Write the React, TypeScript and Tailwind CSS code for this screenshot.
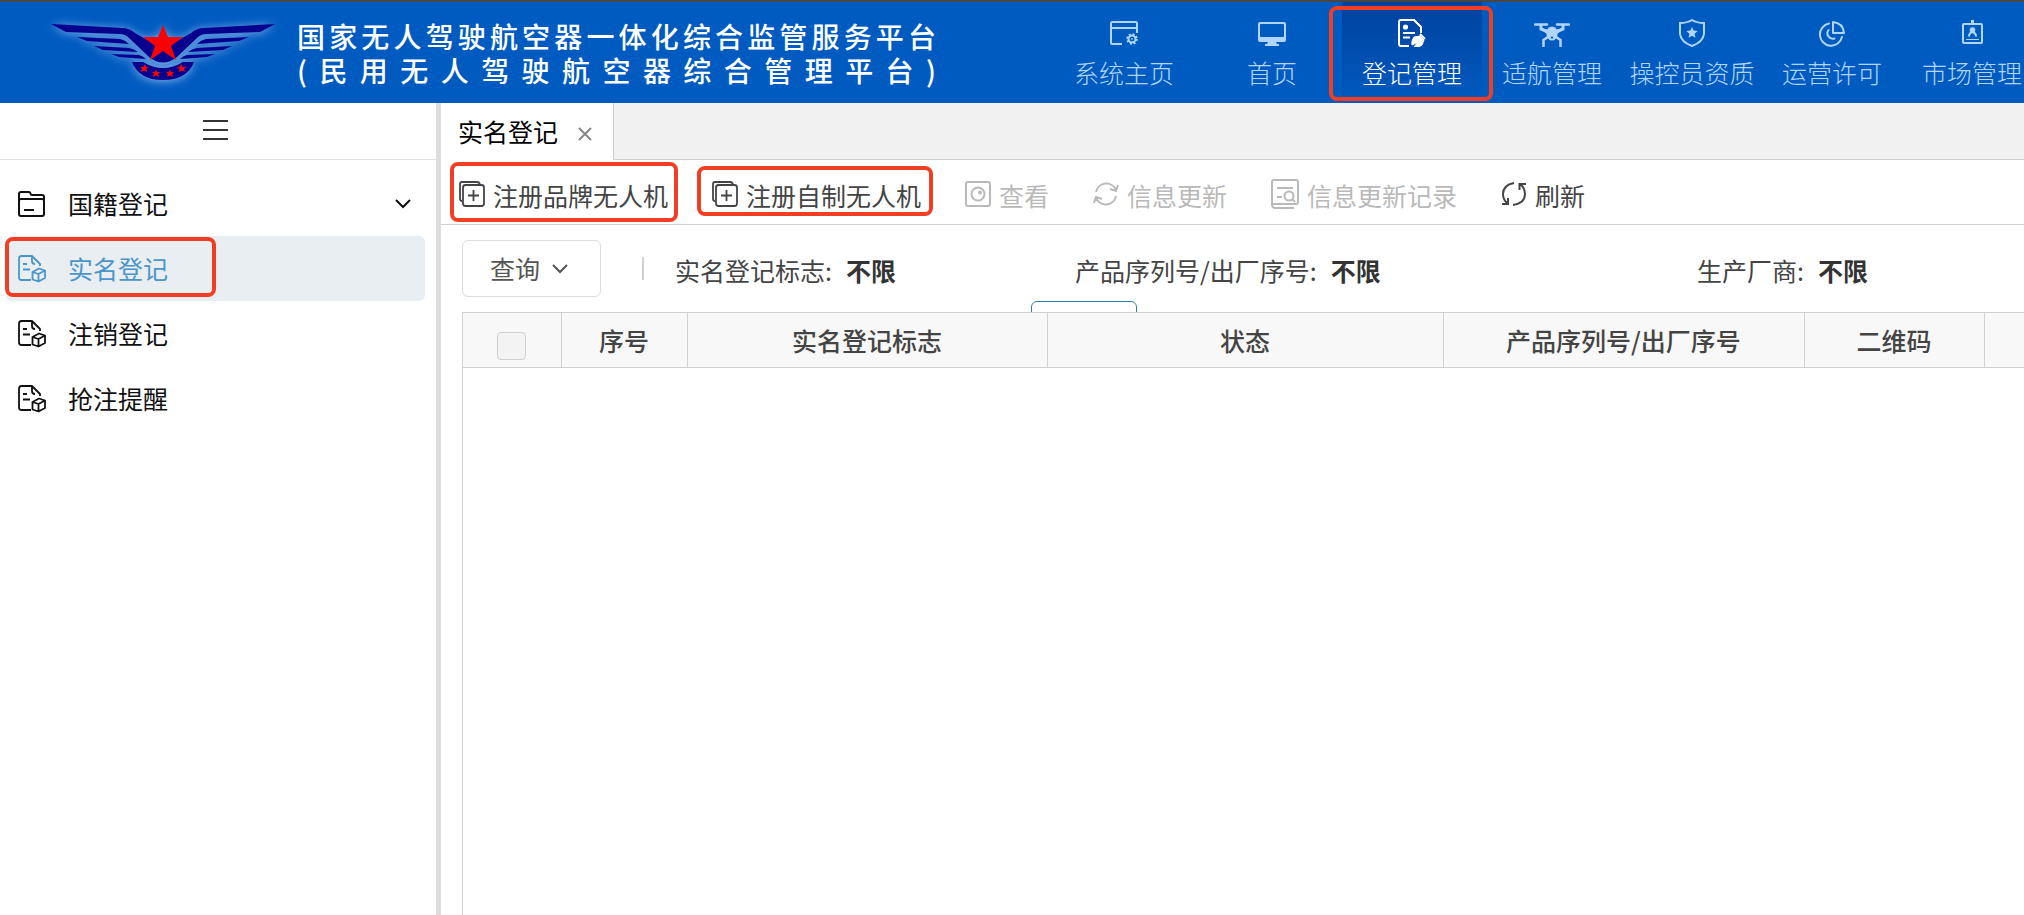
import React from 'react';

interface IconProps {
    className?: string;
}

const HighlightFrame: React.FC<IconProps> = ({ className = '' }) => (
    <span className={`pointer-events-none absolute rounded-lg border-4 border-[#f03e25] ${className}`} />
);

const Logo: React.FC = () => (
    <svg
        viewBox="0 0 224 60"
        className="h-[60px] w-56 shrink-0 overflow-visible drop-shadow-[0_1px_5px_#86b4ee]"
        aria-hidden="true"
    >
        <g fill="#07008f">
            <path d="M0 1 L71 5 Q78 5 84 10 L112 26 L140 10 Q146 5 153 5 L224 1 L209 9 L155 11 Q150 11 146 15 L126 34 Q112 45 98 34 L78 15 Q74 11 69 11 L15 9 Z" />
            <path d="M26 14 L69 16 Q74 17 78 21 L36 18 Z M198 14 L155 16 Q150 17 146 21 L188 18 Z" />
            <path d="M43 23 L78 25 Q83 26 87 29 L52 27 Z M181 23 L146 25 Q141 26 137 29 L172 27 Z" />
            <path d="M60 31 L88 32 Q92 33 95 36 L68 34 Z M164 31 L136 32 Q132 33 129 36 L156 34 Z" />
            <path d="M81 39 H92 Q102 45 112 45 Q122 45 132 39 H143 Q136 57 112 57 Q88 57 81 39 Z" />
        </g>
        <path
            d="M72 13 Q76 15 80 19 L98 36 Q112 49 126 36 L144 19 Q148 15 152 13"
            fill="none"
            stroke="#4c8ad4"
            strokeWidth="1.5"
        />
        <g fill="#f00">
            <path d="M112 2 L117 14 H132 L120 23 L125 37 L112 28 L99 37 L104 23 L92 14 H107 Z" />
            <path d="M94 41 L95 44 L98 44 L95.5 46 L96 49 L93 47.5 L90 49 L91 46 L89 44 L92.5 44 Z" />
            <path d="M105 46 L106 49 L109 49 L107 51 L108 54 L105 52.5 L102 54 L103 51 L101 49 L104 49 Z" />
            <path d="M119 46 L120 49 L123 49 L121 51 L122 54 L119 52.5 L116 54 L117 51 L115 49 L118 49 Z" />
            <path d="M130 41 L131.5 44 L135 44 L133 46 L134 49 L131 47.5 L128 49 L128.5 46 L126 44 L129 44 Z" />
        </g>
    </svg>
);

const navIconClass = 'h-7 w-9';

const SystemIcon: React.FC = () => (
    <svg viewBox="0 0 36 28" className={navIconClass} fill="none" stroke="currentColor" strokeWidth="2" aria-hidden="true">
        <path d="M16 25 H6.5 Q5 25 5 23.5 V4.5 Q5 3 6.5 3 H29.5 Q31 3 31 4.5 V14 M5 9 H31" />
        <circle cx="26" cy="20" r="3.5" />
        <circle cx="26" cy="20" r="4.8" strokeDasharray="1.885 1.885" />
        <circle cx="26" cy="20" r="0.5" strokeWidth="1" />
    </svg>
);

const MonitorIcon: React.FC = () => (
    <svg viewBox="0 0 36 28" className={navIconClass} aria-hidden="true">
        <path
            fill="currentColor"
            fillRule="evenodd"
            d="M6 3 H30 Q32 3 32 5 V21 Q32 23 30 23 H22 L23 25 H25 V27 H11 V25 H13 L14 23 H6 Q4 23 4 21 V5 Q4 3 6 3 Z M7 5 Q6 5 6 6 V17 Q6 18 7 18 H29 Q30 18 30 17 V6 Q30 5 29 5 Z"
        />
    </svg>
);

const RegisterIcon: React.FC = () => (
    <svg viewBox="0 0 36 28" className={navIconClass} fill="none" stroke="currentColor" strokeWidth="2" aria-hidden="true">
        <path d="M15 27 H7 Q5 27 5 25 V3 Q5 1 7 1 H20 L27 8 V14" />
        <path d="M19 1 L27 9 V7 L21 1 Z" fill="currentColor" strokeWidth="1" />
        <path d="M9 14 H21 M9 18.5 H16" />
        <circle cx="11.5" cy="8" r="2.6" fill="currentColor" stroke="none" />
        <path d="M18 26 Q17 22 20 18 L26 17 L30 21 L28 26 Q25 29 20 28 L24 23 Z" fill="currentColor" strokeWidth="1" />
        <path d="M26 15 L31 20" />
    </svg>
);

const DroneIcon: React.FC = () => (
    <svg viewBox="0 0 36 28" className={navIconClass} fill="none" stroke="currentColor" strokeWidth="2" aria-hidden="true">
        <path d="M1 5.5 H13 M23 5.5 H35" strokeLinecap="round" strokeWidth="2.5" />
        <path d="M7 6 V10 L14 13 M29 6 V10 L22 13" strokeWidth="3" />
        <path d="M14 18 L9.5 21 V27 M22 18 L26.5 21 V27" strokeWidth="2.5" strokeLinecap="round" />
        <path
            fill="currentColor"
            fillRule="evenodd"
            d="M18 8 Q22 8 22.5 11 L28 10 L23 15 L23 18 L20 21 H16 L13 18 V15 L8 10 L13.5 11 Q14 8 18 8 Z M18 17 A1.5 1.5 0 1 0 18 20 A1.5 1.5 0 1 0 18 17 Z"
            strokeWidth="0.8"
        />
    </svg>
);

const ShieldIcon: React.FC = () => (
    <svg viewBox="0 0 36 28" className={navIconClass} fill="none" stroke="currentColor" strokeWidth="2" aria-hidden="true">
        <path d="M18 1 Q23 4 30 4 V15 Q29 23 18 27 Q7 23 6 15 V4 Q13 4 18 1 Z" />
        <path
            fill="currentColor"
            stroke="none"
            d="M18 8 L19.6 11.6 L23.7 12 L20.6 14.8 L21.5 18.8 L18 16.7 L14.5 18.8 L15.4 14.8 L12.3 12 L16.4 11.6 Z"
        />
    </svg>
);

const PieIcon: React.FC = () => (
    <svg viewBox="0 0 36 28" className={navIconClass} fill="none" stroke="currentColor" strokeWidth="2" aria-hidden="true">
        <path d="M15 4.5 A11.2 11.2 0 1 0 28 18" strokeLinecap="round" />
        <path d="M19 3 Q29 4 30 14 H19 Z" strokeLinejoin="round" />
        <path d="M14.5 11 A5.5 5.5 0 0 0 20.5 19.5" strokeLinecap="round" />
    </svg>
);

const BadgeIcon: React.FC = () => (
    <svg viewBox="0 0 36 28" className={navIconClass} fill="none" stroke="currentColor" strokeWidth="2" aria-hidden="true">
        <rect x="9" y="5" width="19" height="19" rx="1" />
        <path d="M18.5 1 V5" strokeWidth="3" />
        <circle cx="18.5" cy="11" r="2.8" fill="currentColor" stroke="none" />
        <path d="M15 17.5 Q15 14 18.5 13 Q22 14 22 17.5" />
        <path d="M12 20.5 H25" strokeWidth="1" />
    </svg>
);

const FolderIcon: React.FC = () => (
    <svg viewBox="0 0 28 28" className="size-7" fill="none" stroke="currentColor" strokeWidth="2" aria-hidden="true">
        <path d="M1 10 V4 Q1 2 3 2 H11 Q12 2 12.5 3.5 Q13 5 14 5 H24 Q26 5 26 7 V10" />
        <rect x="1" y="9" width="25" height="17" rx="2" />
        <path d="M6 20 H16" />
    </svg>
);

const DocumentBoxIcon: React.FC = () => (
    <svg
        viewBox="0 0 28 28"
        className="size-7"
        fill="none"
        stroke="currentColor"
        strokeWidth="1.8"
        strokeLinejoin="round"
        aria-hidden="true"
    >
        <path d="M13 25 H3.5 Q1 25 1 22.5 V3.5 Q1 1 3.5 1 H14 L22 9 V11 M14 1 V6 Q14 9 17 9" />
        <path d="M5 9 H9 M5 14.5 H12" />
        <path d="M14.5 17 L21 13.5 L27 15.5 V23 L20.5 26.5 L14.5 24.5 Z M14.5 17 L20.5 19 L27 15.5 M20.5 19 V26.5" />
    </svg>
);

const ChevronIcon: React.FC<IconProps> = ({ className = '' }) => (
    <svg viewBox="0 0 16 10" className={`h-2.5 w-4 ${className}`} fill="none" stroke="currentColor" strokeWidth="2" aria-hidden="true">
        <path d="M1 1 L8 8 L15 1" />
    </svg>
);

const AddIcon: React.FC = () => (
    <svg viewBox="0 0 26 26" className="size-[26px]" fill="none" stroke="currentColor" strokeWidth="1.8" aria-hidden="true">
        <path d="M3 20 Q1 20 1 17.5 V3 Q1 1 3 1 H18 Q20 1 21 3" />
        <rect x="4" y="4" width="21" height="21" rx="2.5" />
        <path d="M14.5 9 V20 M9 14.5 H20" />
    </svg>
);

const ViewIcon: React.FC = () => (
    <svg viewBox="0 0 26 26" className="size-[26px]" fill="none" stroke="currentColor" strokeWidth="2" aria-hidden="true">
        <rect x="1" y="1" width="24" height="24" rx="2" />
        <circle cx="13" cy="13" r="6.5" />
        <circle cx="15" cy="11.5" r="2" fill="currentColor" stroke="none" />
    </svg>
);

const UpdateIcon: React.FC = () => (
    <svg viewBox="0 0 26 26" className="size-[26px]" fill="none" stroke="currentColor" strokeWidth="2" aria-hidden="true">
        <path d="M3 11 A10.5 10.5 0 0 1 23 9 M25 4 L23 10 L17 8" />
        <path d="M23 15 A10.5 10.5 0 0 1 3 17 M1 22 L3 16 L9 18" />
    </svg>
);

const RecordIcon: React.FC = () => (
    <svg viewBox="0 0 28 30" className="-my-0.5 h-[30px] w-7" fill="none" stroke="currentColor" strokeWidth="2" aria-hidden="true">
        <path d="M1 25 V3 Q1 1 3 1 H25 Q27 1 27 3 V23 Q27 25 25 25 H1 Q1 29 4 29 H23" />
        <path d="M6 9 H22 M6 18 H11" />
        <circle cx="18" cy="17" r="4.5" />
        <path d="M21 20 L24 23" />
    </svg>
);

const RefreshIcon: React.FC = () => (
    <svg viewBox="0 0 26 26" className="size-[26px]" fill="none" stroke="currentColor" strokeWidth="2" aria-hidden="true">
        <path d="M13 2 Q2 4 2 13 Q2 19 7 23 M1 23 H7 V17" />
        <path d="M12 24 Q24 22 24 13 Q24 7 19 3 M25 3 H18.5 V9" />
    </svg>
);

const navItems = [
    { label: '系统主页', icon: SystemIcon, wide: true },
    { label: '首页', icon: MonitorIcon },
    { label: '登记管理', icon: RegisterIcon, active: true },
    { label: '适航管理', icon: DroneIcon },
    { label: '操控员资质', icon: ShieldIcon },
    { label: '运营许可', icon: PieIcon },
    { label: '市场管理', icon: BadgeIcon },
];

const menuItems = [
    { label: '国籍登记', icon: FolderIcon, expandable: true },
    { label: '实名登记', icon: DocumentBoxIcon, active: true },
    { label: '注销登记', icon: DocumentBoxIcon },
    { label: '抢注提醒', icon: DocumentBoxIcon },
];

const actions = [
    { label: '注册品牌无人机', icon: AddIcon, frame: '-left-[9px] -right-[10px] -top-[17px] -bottom-[11px]' },
    { label: '注册自制无人机', icon: AddIcon, frame: '-left-[15px] -right-[12px] -top-[13px] -bottom-[5px]' },
    { label: '查看', icon: ViewIcon, disabled: true },
    { label: '信息更新', icon: UpdateIcon, disabled: true },
    { label: '信息更新记录', icon: RecordIcon, disabled: true },
    { label: '刷新', icon: RefreshIcon },
];

const filters = ['实名登记标志', '产品序列号/出厂序号', '生产厂商'];

const columns = [
    { label: '序号', width: 'w-[126px]' },
    { label: '实名登记标志', width: 'w-[360px]' },
    { label: '状态', width: 'w-[396px]' },
    { label: '产品序列号/出厂序号', width: 'w-[361px]' },
    { label: '二维码', width: 'w-[180px]' },
    { label: '', width: '' },
];

const Header: React.FC = () => (
    <header className="flex h-[103px] shrink-0 overflow-hidden border-t-2 border-[#464646] bg-[#005bc0]">
        <div className="flex shrink-0 items-center pl-[51px]">
            <Logo />
            <h1 className="ml-[22px] w-[639px] text-[28px] leading-[34px] font-medium text-white [text-align-last:justify]">
                国家无人驾驶航空器一体化综合监管服务平台
                <br />
                (民用无人驾驶航空器综合管理平台)
            </h1>
        </div>
        <nav className="ml-[110px] flex shrink-0">
            {navItems.map(({ label, icon: Icon, wide, active }) => (
                <a
                    key={label}
                    href="#"
                    className={`relative flex shrink-0 flex-col items-center gap-[11px] pt-[17px] text-[25px] leading-7 font-light ${
                        wide ? 'w-[156px]' : 'w-[140px]'
                    } ${active ? 'bg-linear-to-b from-[#00419f] to-[#005bc0] text-white' : 'text-[#b0d6ff]'}`}
                >
                    <Icon />
                    <span>{label}</span>
                    {active && <HighlightFrame className="-left-[13px] -right-[11px] top-1 bottom-0.5" />}
                </a>
            ))}
        </nav>
    </header>
);

const Sidebar: React.FC = () => (
    <aside className="w-[441px] shrink-0 border-r-[5px] border-[#dddddd] bg-white text-[#111]">
        <div className="flex h-[57px] items-center justify-center border-b border-[#e2e2e2]">
            <button type="button" aria-label="菜单" className="-mt-0.5 mr-[5px] flex flex-col gap-[7px]">
                <span className="h-0.5 w-[25px] bg-[#333]" />
                <span className="h-0.5 w-[25px] bg-[#333]" />
                <span className="h-0.5 w-[25px] bg-[#333]" />
            </button>
        </div>
        <nav className="pt-[11px] pr-[11px] pl-1.5">
            {menuItems.map(({ label, icon: Icon, active, expandable }) => (
                <a
                    key={label}
                    href="#"
                    className={`relative flex h-[65px] items-center gap-[22px] rounded-md pr-3.5 pl-3 text-[25px] ${
                        active ? 'bg-[#e9eef3] text-[#4a95c9]' : ''
                    }`}
                >
                    <Icon />
                    <span>{label}</span>
                    {expandable && <ChevronIcon className="ml-auto" />}
                    {active && <HighlightFrame className="-left-px top-px h-[60px] w-[211px]" />}
                </a>
            ))}
        </nav>
    </aside>
);

const Toolbar: React.FC = () => (
    <div className="flex h-[65px] items-center gap-11 border-b border-[#d2d2d2] pt-[5px] pl-[18px]">
        {actions.map(({ label, icon: Icon, disabled, frame }) => (
            <button
                key={label}
                type="button"
                disabled={disabled}
                className={`relative flex shrink-0 items-center gap-2 leading-8 ${disabled ? 'text-[#b9b9b9]' : 'text-[#444]'}`}
            >
                <span className="-mt-0.5">
                    <Icon />
                </span>
                <span>{label}</span>
                {frame && <HighlightFrame className={frame} />}
            </button>
        ))}
    </div>
);

const FilterBar: React.FC = () => (
    <div className="relative flex h-[87px] items-center overflow-hidden pl-[21px] text-[#444]">
        <button
            type="button"
            className="flex h-[57px] w-[139px] shrink-0 items-center gap-3 rounded-md border border-[#dcdcdc] pl-[27px] text-[#555]"
        >
            查询
            <ChevronIcon />
        </button>
        <span className="ml-[41px] h-[23px] w-0.5 shrink-0 bg-[#d0d0d0]" />
        <dl className="ml-[31px] grid grow grid-cols-[400px_622px_auto] pt-1">
            {filters.map((name) => (
                <div key={name} className="flex gap-3.5 whitespace-nowrap">
                    <dt>{name}:</dt>
                    <dd className="font-bold text-[#333]">不限</dd>
                </div>
            ))}
        </dl>
        <button
            type="button"
            aria-label="展开"
            className="absolute top-[76px] left-[590px] h-10 w-[106px] rounded-md border border-[#2f7cab] bg-white"
        />
    </div>
);

const DataTable: React.FC = () => (
    <div className="ml-[21px] flex-1 border-t border-l border-[#d0d0d0]">
        <table className="w-full table-fixed border-collapse bg-[#f8f8f8] text-[#444]">
            <thead>
                <tr className="h-[54px] border-b border-[#d0d0d0]">
                    <th className="w-[98px] border-r border-[#d0d0d0] pt-3">
                        <input
                            type="checkbox"
                            aria-label="全选"
                            className="mx-auto block h-7 w-[29px] appearance-none rounded border border-[#d0d0d0] bg-[#f3f3f3]"
                        />
                    </th>
                    {columns.map(({ label, width }) => (
                        <th key={label} className={`border-r border-[#d0d0d0] pt-0.5 font-medium last:border-r-0 ${width}`}>
                            {label}
                        </th>
                    ))}
                </tr>
            </thead>
            <tbody />
        </table>
    </div>
);

const App: React.FC = () => (
    <div className="flex min-h-screen flex-col overflow-x-hidden bg-white font-['Noto_Sans_CJK_SC',sans-serif]">
        <Header />
        <div className="flex flex-1">
            <Sidebar />
            <main className="flex min-w-0 flex-1 flex-col text-[25px]">
                <div className="flex h-[57px] border-b border-[#d0d0d0] bg-[#f1f1f1]">
                    <div className="-mb-px flex items-center gap-[17px] border-r border-[#d0d0d0] bg-white pr-[18px] pl-[17px] text-black">
                        <span>实名登记</span>
                        <button type="button" aria-label="关闭" className="mt-1">
                            <svg viewBox="0 0 20 20" className="size-5" fill="none" stroke="#888" strokeWidth="2" aria-hidden="true">
                                <path d="M4 4 L16 16 M16 4 L4 16" />
                            </svg>
                        </button>
                    </div>
                </div>
                <Toolbar />
                <FilterBar />
                <DataTable />
            </main>
        </div>
    </div>
);

export default App;
